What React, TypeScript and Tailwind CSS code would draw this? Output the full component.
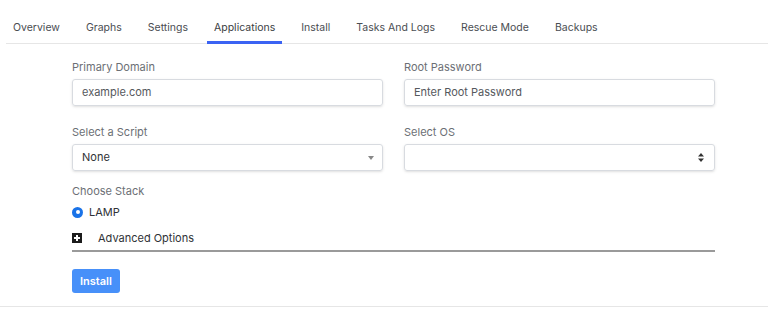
import { useState } from 'react';

const tabs = ['Overview', 'Graphs', 'Settings', 'Applications', 'Install', 'Tasks And Logs', 'Rescue Mode', 'Backups'];

const Field = ({ label, children }: { label: string; children: React.ReactNode }) => (
  <div className="flex flex-col">
    <label className="text-[11px] text-[#6c6f75] mb-[5px] leading-[14px]">{label}</label>
    {children}
  </div>
);

const App = () => {
  const [active] = useState('Applications');

  return (
    <div className="w-[768px] h-[321px] bg-white font-['Inter',sans-serif] text-[#3a3d42]">
      <div className="pl-[6px] pt-[20px]">
        <div className="flex gap-[12px] border-b border-[#e6e6e6]">
          {tabs.map((tab) => (
            <div
              key={tab}
              className={`px-[7px] pb-[5px] text-[10.5px] leading-[16px] border-b-[3px] -mb-px ${
                tab === active ? 'border-[#3b63f3] text-[#3a3d42]' : 'border-transparent text-[#4a4d52]'
              }`}
            >
              {tab}
            </div>
          ))}
        </div>
      </div>

      <div className="ml-[72px] w-[643px] pt-[16px]">
        <div className="grid grid-cols-2 gap-x-[21px] gap-y-[19px]">
          <Field label="Primary Domain">
            <div className="h-[27px] border border-[#d8dbe0] rounded-[3px] shadow-sm px-[9px] flex items-center text-[11px] text-[#55585d]">
              example.com
            </div>
          </Field>
          <Field label="Root Password">
            <div className="h-[27px] border border-[#d8dbe0] rounded-[3px] shadow-sm px-[9px] flex items-center text-[11px] text-[#55585d]">
              Enter Root Password
            </div>
          </Field>
          <Field label="Select a Script">
            <div className="h-[27px] border border-[#d8dbe0] rounded-[3px] shadow-sm px-[9px] flex items-center justify-between text-[11px] text-[#2f3236]">
              <span>None</span>
              <svg width="6" height="4" viewBox="0 0 6 4" className="mr-[-1px]">
                <path d="M0 0h6L3 4z" fill="#888" />
              </svg>
            </div>
          </Field>
          <Field label="Select OS">
            <div className="h-[27px] border border-[#d8dbe0] rounded-[3px] shadow-sm px-[9px] flex items-center justify-end">
              <svg width="6" height="9" viewBox="0 0 6 9" className="mr-[1px]">
                <path d="M0 3.5h6L3 0z M0 5.5h6L3 9z" fill="#333" />
              </svg>
            </div>
          </Field>
        </div>

        <div className="mt-[13px] text-[11px] text-[#6c6f75] leading-[14px]">Choose Stack</div>
        <div className="mt-[7px] flex items-center gap-[6px]">
          <span className="w-[11px] h-[11px] rounded-full bg-[#1a73e8] flex items-center justify-center">
            <span className="w-[4px] h-[4px] rounded-full bg-white" />
          </span>
          <span className="text-[11px] text-[#2f3236] leading-[14px]">LAMP</span>
        </div>

        <div className="mt-[12px] flex items-center gap-[16px] pb-[5px] border-b-2 border-[#9a9a9a]">
          <span className="w-[10px] h-[10px] bg-[#1c1c1c] flex items-center justify-center">
            <svg width="8" height="8" viewBox="0 0 8 8">
              <path d="M3 1h2v2h2v2H5v2H3V5H1V3h2z" fill="#fff" />
            </svg>
          </span>
          <span className="text-[11px] text-[#2f3236] leading-[14px]">Advanced Options</span>
        </div>

        <button className="mt-[17px] h-[24px] px-[8px] rounded-[3px] bg-[#4790f9] text-white text-[11px] font-semibold">
          Install
        </button>
      </div>

      <div className="mt-[13px] border-b border-[#e6e6e6]" />
    </div>
  );
};

export default App;
